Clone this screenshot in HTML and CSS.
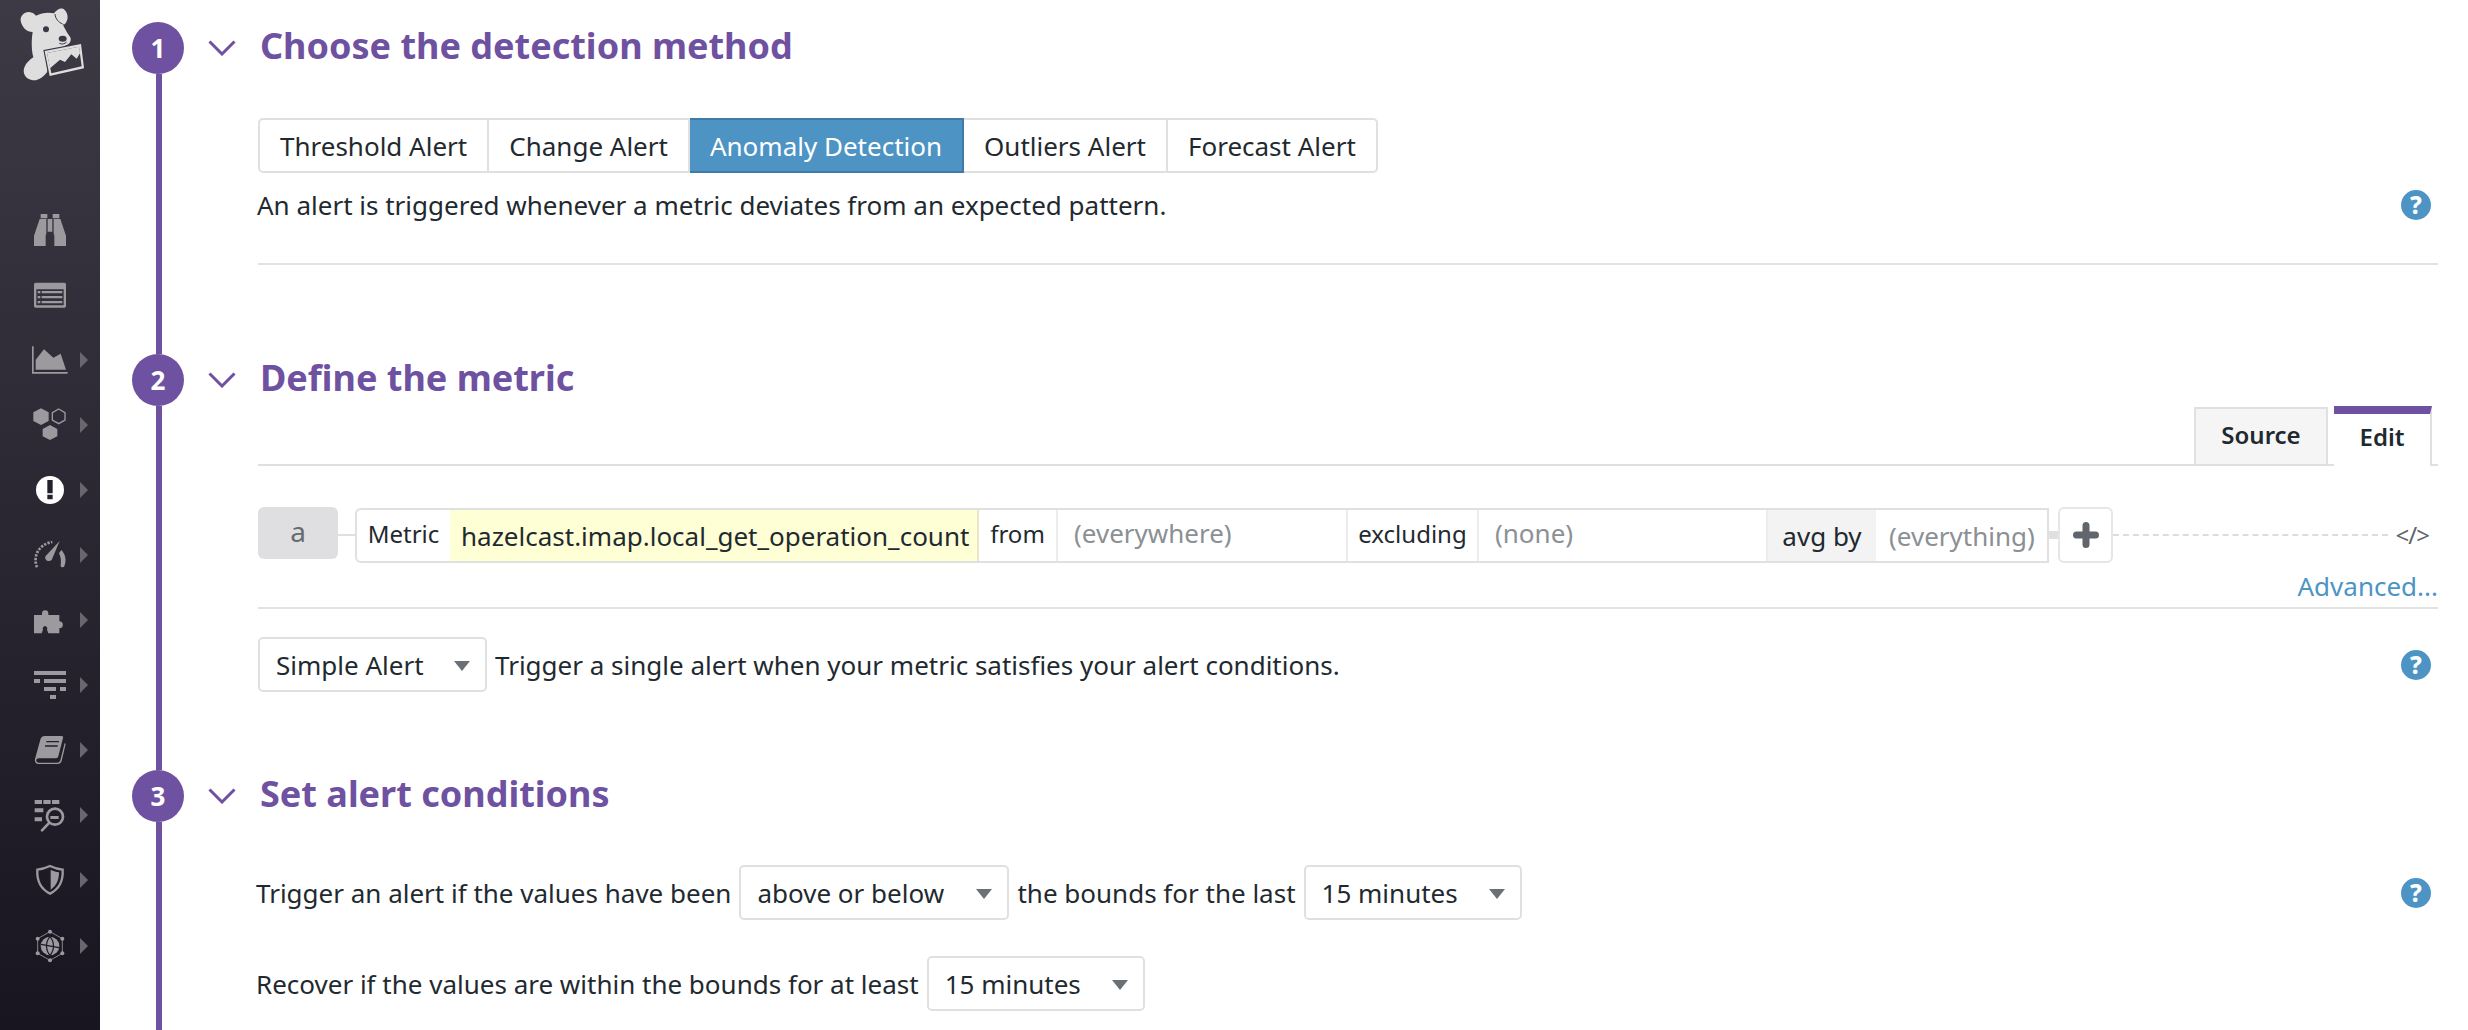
FILE: index.html
```html
<!DOCTYPE html>
<html lang="en">

<head>
    <meta charset="UTF-8">
    <title>New Monitor</title>
    <link rel="stylesheet" href="styles.css">
</head>

<body>
    <div id="page">
        <aside class="sidebar">
            <svg class="logo" viewBox="0 0 270 270">
                <path fill="#dedede" d="M32 62 C30 45 48 30 66 38 C72 40 76 44 78 47 C95 38 115 36 132 40 C140 28 155 20 164 30 C174 40 176 56 168 68 C164 74 160 74 158 72 C164 86 172 100 180 110 C186 120 180 132 168 136 L150 146 L108 152 L112 215 C100 230 85 244 65 240 C45 236 36 216 44 200 C48 190 58 180 70 172 C64 150 64 120 68 96 C50 96 36 82 32 62 Z" />
                <path fill="#3c3843" d="M100 150 L216 128 L226 208 L116 232 Z" />
                <path fill="#dedede" d="M104 153 L213 132 L222 205 L119 228 Z" />
                <path fill="#3c3843" d="M111 159 L207 140 L215 199 L124 220 Z" />
                <path fill="#dedede" d="M111 159 L207 140 L210 160 L200 176 L184 163 L165 186 L150 179 L120 205 Z" />
                <circle cx="108" cy="88" r="9" fill="#3c3843" />
                <ellipse cx="158" cy="116" rx="12" ry="9" fill="#3c3843" />
                <path fill="none" stroke="#3c3843" stroke-width="3" d="M135 42 C136 56 146 68 158 72 M148 130 C156 134 164 132 170 126" />
            </svg>
            <ul class="nav">
                <li class="nav-item">
                    <svg viewBox="0 0 102 102"><path d="M23 3h20v13H23zM59 3h20v13H59zM20 18h20v44c-2 3-2 6-2 10v27H3V68zM82 18H62v44c2 3 2 6 2 10v27h35V68zM44 18h14v38H44z" /></svg>
                </li>
                <li class="nav-item">
                    <svg viewBox="0 0 102 102"><path fill-rule="evenodd" d="M8 14h86a5 5 0 0 1 5 5v65a5 5 0 0 1-5 5H8a5 5 0 0 1-5-5V19a5 5 0 0 1 5-5zM10 34v48h82V34z" /><path d="M14 39h8v7h-8zM26 39h62v7H26zM14 54h8v7h-8zM26 54h62v7H26zM14 69h8v7h-8zM26 69h62v7H26z" /></svg>
                </li>
                <li class="nav-item has-sub">
                    <svg viewBox="0 0 102 102"><path d="M-3 10h5v77h102v5H-3z" /><path d="M8 80V50l25-31 28 25 22-12 16 48z" /></svg>
                </li>
                <li class="nav-item has-sub">
                    <svg viewBox="0 0 102 102"><path d="M24 1l23 12v26L24 51 1 39V13zM51 51l22 12v22L51 96 29 85V63z" /><path fill="none" stroke="currentColor" stroke-width="4" d="M77 3l19 11v22L77 47 58 36V14z" /></svg>
                </li>
                <li class="nav-item has-sub active">
                    <svg viewBox="0 0 102 102"><circle cx="51" cy="51" r="42" fill="#fff" /><path fill="#25212c" d="M43 21h16v40H43zM43 65h16v14H43z" /></svg>
                </li>
                <li class="nav-item has-sub">
                    <svg viewBox="0 0 102 102"><path d="M80 9L38 54c-6 10 8 21 18 12zM85 36c11 12 17 28 9 49-2 5-11 3-11-2 2-16 0-28-5-37z" /><path fill="none" stroke="currentColor" stroke-width="8" stroke-dasharray="7 4" d="M12 88C0 60 12 20 58 12" /></svg>
                </li>
                <li class="nav-item has-sub">
                    <svg viewBox="0 0 102 102"><path d="M3 36h24v-5a9.500 9.500 0 1 1 19 0v5h33v19a10.500 10.500 0 1 1 0 21v15H46l-4-11a7 7 0 1 0-12 0l-4 11H3z" /></svg>
                </li>
                <li class="nav-item has-sub">
                    <svg viewBox="0 0 102 102"><path d="M3 9h96v12H3zM3 33h18v12H3zM33 33h66v12H33zM33 57h36v12H33zM81 57h18v12H81zM51 81h18v12H51z" /></svg>
                </li>
                <li class="nav-item has-sub">
                    <svg viewBox="0 0 102 102"><path d="M35 9h51c4 0 5 3 4 6L76 70c-1 4-3 6-7 6H18c-6 0-9 4-8 8s5 5 8 5h54c6 0 8-2 10-7l13-52 3 3-12 51c-2 6-6 9-12 9H16c-8 0-11-7-10-15l16-58c2-7 6-11 13-11z" /><path fill="none" stroke="#25212c" stroke-width="4" d="M40 26h38M36 39h38" /></svg>
                </li>
                <li class="nav-item has-sub">
                    <svg viewBox="0 0 102 102"><path d="M5 6h22v12H5zM31 6h22v12H31zM57 6h22v12H57zM5 31h26v12H5zM5 58h22v12H5zM52 54h25v9H52z" /><circle cx="66" cy="56" r="24" fill="none" stroke="currentColor" stroke-width="8" /><path fill="none" stroke="currentColor" stroke-width="8" stroke-linecap="round" d="M47 76L27 97" /></svg>
                </li>
                <li class="nav-item has-sub">
                    <svg viewBox="0 0 102 102"><path fill="none" stroke="currentColor" stroke-width="7" d="M51 9c13 6 26 10 38 11 2 34-10 58-38 72C23 78 11 54 13 20c12-1 25-5 38-11z" /><path d="M53 21c9 3 17 6 25 7 0 24-8 41-25 52z" /></svg>
                </li>
                <li class="nav-item has-sub">
                    <svg viewBox="0 0 102 102"><circle cx="51" cy="51" r="28" /><path fill="none" stroke="#1d1923" stroke-width="3.500" d="M24 46l54 10M51 23c-14 16-14 40 0 56M51 23c14 16 14 40 0 56" /><path fill="none" stroke="currentColor" stroke-width="2.500" d="M51 8l37 21v44L51 94 14 73V29z" /><circle cx="51" cy="8" r="6" /><circle cx="88" cy="29" r="6" /><circle cx="88" cy="73" r="6" /><circle cx="51" cy="94" r="6" /><circle cx="14" cy="73" r="6" /><circle cx="14" cy="29" r="6" /></svg>
                </li>
            </ul>
        </aside>

        <main class="steps">
            <section class="step step-method">
                <div class="rail">
                    <div class="step-num">1</div>
                    <div class="rail-line"></div>
                </div>
                <div class="step-main">
                    <h2 class="step-head">
                        <svg class="chevron" viewBox="0 0 28 16"><path d="M1.500 1.500L14 14 26.500 1.500" /></svg>
                        Choose the detection method
                    </h2>
                    <div class="step-body">
                        <div class="btn-group">
                            <button class="seg">Threshold Alert</button>
                            <button class="seg">Change Alert</button>
                            <button class="seg selected">Anomaly Detection</button>
                            <button class="seg">Outliers Alert</button>
                            <button class="seg">Forecast Alert</button>
                        </div>
                        <div class="desc-row">
                            <span>An alert is triggered whenever a metric deviates from an expected pattern.</span>
                            <span class="help">?</span>
                        </div>
                    </div>
                </div>
            </section>

            <section class="step step-metric">
                <div class="rail">
                    <div class="step-num">2</div>
                    <div class="rail-line"></div>
                </div>
                <div class="step-main">
                    <h2 class="step-head">
                        <svg class="chevron" viewBox="0 0 28 16"><path d="M1.500 1.500L14 14 26.500 1.500" /></svg>
                        Define the metric
                    </h2>
                    <div class="step-body">
                        <div class="query-tabs">
                            <span class="qtab">Source</span>
                            <span class="qtab current">Edit</span>
                        </div>
                        <div class="query-row">
                            <span class="query-name">a</span>
                            <span class="joint"></span>
                            <div class="query-box">
                                <span class="q-label q-metric">Metric</span>
                                <span class="q-value">hazelcast.imap.local_get_operation_count</span>
                                <span class="q-label q-from">from</span>
                                <span class="q-input q-where">(everywhere)</span>
                                <span class="q-label q-excl">excluding</span>
                                <span class="q-input q-none">(none)</span>
                                <span class="q-label q-avg">avg by</span>
                                <span class="q-input q-group">(everything)</span>
                            </div>
                            <span class="joint joint-short"></span>
                            <button class="add-btn">
                                <svg viewBox="0 0 26 26"><path d="M3.500 13h19M13 3.500v19" /></svg>
                            </button>
                            <span class="dots"></span>
                            <span class="code-toggle">&lt;/&gt;</span>
                        </div>
                        <div class="advanced-row"><a class="advanced">Advanced...</a></div>
                        <div class="alert-row">
                            <span class="select select-alert">Simple Alert</span>
                            <span>Trigger a single alert when your metric satisfies your alert conditions.</span>
                            <span class="help">?</span>
                        </div>
                    </div>
                </div>
            </section>

            <section class="step step-conditions">
                <div class="rail">
                    <div class="step-num">3</div>
                    <div class="rail-line"></div>
                </div>
                <div class="step-main">
                    <h2 class="step-head">
                        <svg class="chevron" viewBox="0 0 28 16"><path d="M1.500 1.500L14 14 26.500 1.500" /></svg>
                        Set alert conditions
                    </h2>
                    <div class="step-body">
                        <div class="cond-row first">
                            <span>Trigger an alert if the values have been</span>
                            <span class="select select-dir">above or below</span>
                            <span>the bounds for the last</span>
                            <span class="select select-time">15 minutes</span>
                            <span class="help">?</span>
                        </div>
                        <div class="cond-row">
                            <span>Recover if the values are within the bounds for at least</span>
                            <span class="select select-time">15 minutes</span>
                        </div>
                    </div>
                </div>
            </section>
        </main>
    </div>
</body>

</html>
```

FILE: styles.css
```css
* {
    box-sizing: border-box;
}

html,
body {
    margin: 0;
    height: 100%;
    overflow: hidden;
}

body {
    background: #fff;
    color: #1f2a30;
    font: normal 26px "Noto Sans", sans-serif;
}

#page {
    display: flex;
    height: 1030px;
    overflow: hidden;
}

/* sidebar */
.sidebar {
    flex: none;
    width: 100px;
    background: linear-gradient(#3d3945, #191520);
}

.logo {
    display: block;
    width: 90px;
    height: 90px;
    margin-left: 10px;
}

.nav {
    list-style: none;
    margin: 107px 0 0;
    padding: 0;
}

.nav-item {
    position: relative;
    display: flex;
    align-items: center;
    justify-content: center;
    height: 65.100px;
    color: #9c999f;
}

.nav-item svg {
    width: 34px;
    height: 34px;
    fill: currentColor;
    overflow: visible;
}

.nav-item.has-sub::after {
    content: "";
    position: absolute;
    left: 80px;
    top: 50%;
    margin-top: -8px;
    border-left: 8px solid #6a6670;
    border-top: 8px solid transparent;
    border-bottom: 8px solid transparent;
}

/* steps */
.steps {
    flex: 1;
    min-width: 0;
    padding-top: 22px;
}

.step {
    display: flex;
    padding-left: 32px;
}

.step-method {
    height: 332px;
}

.step-metric {
    height: 416px;
}

.step-conditions {
    height: 400px;
}

.rail {
    flex: none;
    display: flex;
    flex-direction: column;
    width: 52px;
}

.step-num {
    flex: none;
    width: 52px;
    height: 52px;
    border-radius: 50%;
    background: #6f51a1;
    color: #fff;
    font-size: 26px;
    font-weight: 700;
    line-height: 52px;
    text-align: center;
}

.rail-line {
    flex: 1;
    width: 6px;
    margin-left: 24px;
    background: #6f51a1;
}

.step-main {
    flex: 1;
    min-width: 0;
    margin-left: 24px;
}

.step-head {
    display: flex;
    align-items: center;
    gap: 24px;
    height: 52px;
    margin: 0;
    padding-bottom: 6px;
    color: #6f51a1;
    font-size: 36px;
    font-weight: 700;
}

.chevron {
    flex: none;
    width: 28px;
    height: 16px;
    margin-top: 6px;
    fill: none;
    stroke: #6f51a1;
    stroke-width: 3;
}

.step-body {
    margin: 0 30px 0 50px;
}

/* alert type buttons */
.btn-group {
    display: flex;
    margin-top: 44px;
}

.seg {
    height: 55px;
    padding: 0 20px;
    border: 2px solid #e0e0e0;
    border-left-width: 0;
    background: #fff;
    color: inherit;
    font: inherit;
}

.seg:first-child {
    border-left-width: 2px;
    border-radius: 5px 0 0 5px;
}

.seg:last-child {
    border-radius: 0 5px 5px 0;
}

.seg.selected {
    border-color: #3f7ba6;
    background: #4d94c4;
    color: #fff;
}

.desc-row {
    display: flex;
    justify-content: space-between;
    align-items: center;
    height: 64px;
    margin-bottom: 26px;
    text-indent: -1px;
}

.step-method .step-body {
    border-bottom: 2px solid #e3e3e3;
}

.help {
    flex: none;
    width: 30px;
    height: 30px;
    margin-right: 7px;
    border-radius: 50%;
    background: #4d94c4;
    color: #fff;
    font-size: 24px;
    font-weight: 800;
    line-height: 30px;
    text-align: center;
    text-indent: 0;
}

/* query editor */
.query-tabs {
    display: flex;
    justify-content: flex-end;
    height: 60px;
    padding: 0 6px 0 0;
    border-bottom: 2px solid #e0e0e0;
}

.qtab {
    display: flex;
    align-items: center;
    justify-content: center;
    align-self: flex-end;
    height: 57px;
    width: 134px;
    padding-bottom: 4px;
    border: 2px solid #e0e0e0;
    border-bottom: 0;
    background: #f5f5f5;
    font-size: 24px;
    font-weight: 600;
}

.qtab.current {
    width: 98px;
    height: 60px;
    margin: 0 0 -2px 6px;
    padding-bottom: 8px;
    border-top: 8px solid #6f51a1;
    border-left: 0;
    background: #fff;
}

.query-row {
    display: flex;
    align-items: center;
    margin-top: 40px;
    height: 57px;
}

.query-name {
    width: 80px;
    height: 52px;
    margin-bottom: 3px;
    border-radius: 6px;
    background: #dfdfe1;
    color: #666c72;
    font-size: 28px;
    line-height: 48px;
    text-align: center;
}

.joint {
    width: 17px;
    height: 2px;
    background: #e0e0e0;
}

.joint-short {
    width: 9px;
    height: 8px;
}

.query-box {
    display: flex;
    width: 1694px;
    height: 55px;
    border: 2px solid #e0e0e0;
    border-radius: 6px 0 0 6px;
    align-self: flex-end;
}

.q-label,
.q-input,
.q-value {
    display: flex;
    align-items: center;
    flex: none;
    height: 100%;
    border-right: 2px solid #ececec;
}

.q-label {
    justify-content: center;
    padding-bottom: 4px;
    font-size: 24px;
}

.q-input {
    padding: 0 0 5px 16px;
    color: #8b9094;
}

.q-metric {
    width: 93px;
    border-right: 0;
}

.q-value {
    width: 529px;
    padding-left: 11px;
    background: #ffffd6;
    border-right-color: #e8e8c8;
}

.q-from {
    width: 79px;
}

.q-where {
    width: 290px;
}

.q-excl {
    width: 131px;
}

.q-none {
    width: 289px;
}

.q-avg {
    width: 108px;
    padding-bottom: 0;
    border-right: 0;
    background: #f3f3f3;
    font-size: 26px;
}

.q-group {
    width: 171px;
    padding: 0 0 0 13px;
    border-right: 0;
}

.add-btn {
    display: flex;
    align-items: center;
    justify-content: center;
    flex: none;
    width: 55px;
    height: 56px;
    padding: 0;
    border: 2px solid #e6e6e6;
    border-radius: 6px;
    background: #fff;
}

.add-btn svg {
    width: 26px;
    height: 26px;
    fill: none;
    stroke: #60666c;
    stroke-width: 7;
    stroke-linecap: round;
}

.dots {
    flex: 1;
    height: 0;
    border-top: 2px dashed #dcdcdc;
}

.code-toggle {
    flex: none;
    width: 50px;
    padding-right: 9px;
    color: #60666c;
    font-size: 24px;
    letter-spacing: -1px;
    text-align: right;
}

.advanced-row {
    display: flex;
    justify-content: flex-end;
    align-items: center;
    height: 46px;
    padding-top: 2px;
    border-bottom: 2px solid #e3e3e3;
}

.advanced {
    color: #4d94c4;
}

.alert-row {
    display: flex;
    align-items: center;
    gap: 8px;
    margin-top: 28px;
}

.alert-row .help,
.cond-row .help {
    margin-left: auto;
}

.select {
    position: relative;
    display: flex;
    align-items: center;
    flex: none;
    height: 55px;
    padding-left: 16px;
    border: 2px solid #e0e0e0;
    border-radius: 5px;
}

.select::after {
    content: "";
    position: absolute;
    right: 15px;
    top: 50%;
    margin-top: -4px;
    border-top: 10px solid #6b7076;
    border-left: 8px solid transparent;
    border-right: 8px solid transparent;
}

.select-alert {
    width: 229px;
}

.select-dir {
    width: 270px;
}

.select-time {
    width: 218px;
}

.cond-row {
    display: flex;
    align-items: center;
    gap: 8px;
    margin: 36px 0 0 -2px;
}

.cond-row.first {
    margin-top: 43px;
}
```
